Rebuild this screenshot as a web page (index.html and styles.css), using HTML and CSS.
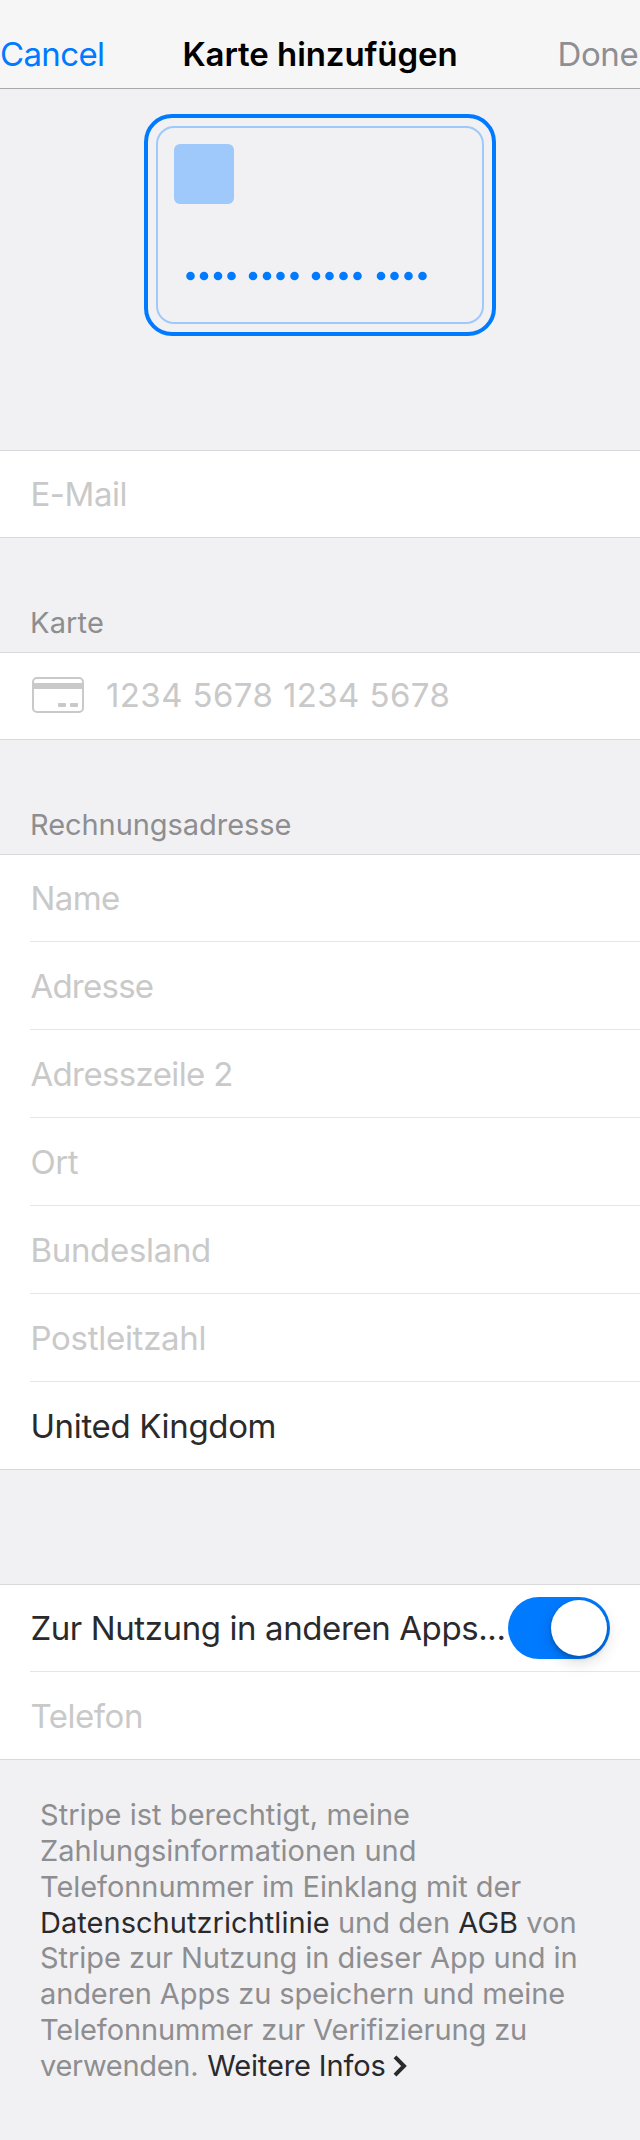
FILE: index.html
```html
<!DOCTYPE html>
<html lang="de">
<head>
<meta charset="utf-8">
<title>Karte hinzufügen</title>
<link rel="stylesheet" href="styles.css">
</head>
<body>
<header class="navbar">
  <span class="nav-action nav-cancel">Cancel</span>
  <h1 class="nav-title">Karte hinzufügen</h1>
  <span class="nav-action nav-done">Done</span>
</header>
<main>
  <div class="hero">
    <svg class="hero-card" width="352" height="222" viewBox="0 0 352 222">
      <rect x="2" y="2" width="348" height="218" rx="26" fill="none" stroke="#007aff" stroke-width="4"/>
      <rect x="13" y="13" width="326" height="196" rx="17" fill="none" stroke="#9fc9fb" stroke-width="2"/>
      <rect x="30" y="30" width="60" height="60" rx="6" fill="#9fc9fb"/>
      <g fill="#007aff">
        <circle cx="46.5" cy="162" r="4.3"/><circle cx="60" cy="162" r="4.3"/><circle cx="74" cy="162" r="4.3"/><circle cx="87.5" cy="162" r="4.3"/>
        <circle cx="109" cy="162" r="4.3"/><circle cx="123" cy="162" r="4.3"/><circle cx="136.5" cy="162" r="4.3"/><circle cx="150.5" cy="162" r="4.3"/>
        <circle cx="172" cy="162" r="4.3"/><circle cx="185.5" cy="162" r="4.3"/><circle cx="199.5" cy="162" r="4.3"/><circle cx="213.5" cy="162" r="4.3"/>
        <circle cx="237" cy="162" r="4.3"/><circle cx="250.5" cy="162" r="4.3"/><circle cx="264.5" cy="162" r="4.3"/><circle cx="278.5" cy="162" r="4.3"/>
      </g>
    </svg>
  </div>

  <section class="group">
    <div class="row"><span class="placeholder email">E-Mail</span></div>
  </section>

  <h2 class="group-label label-card">Karte</h2>
  <section class="group">
    <div class="row row-number">
      <svg class="card-icon" width="52" height="36" viewBox="0 0 52 36">
        <rect x="1" y="1" width="50" height="34" rx="4" fill="none" stroke="#c9c9c9" stroke-width="2"/>
        <path d="M1 6h50v6H1z" fill="#c9c9c9"/>
        <rect x="26" y="26" width="8" height="4" rx="1" fill="#c9c9c9"/>
        <rect x="38" y="26" width="8" height="4" rx="1" fill="#c9c9c9"/>
      </svg>
      <span class="placeholder number">1234 5678 1234 5678</span>
    </div>
  </section>

  <h2 class="group-label label-address">Rechnungsadresse</h2>
  <section class="group">
    <div class="row"><span class="placeholder name">Name</span></div>
    <div class="row"><span class="placeholder street">Adresse</span></div>
    <div class="row"><span class="placeholder street-2">Adresszeile 2</span></div>
    <div class="row"><span class="placeholder city">Ort</span></div>
    <div class="row"><span class="placeholder state">Bundesland</span></div>
    <div class="row"><span class="placeholder zip">Postleitzahl</span></div>
    <div class="row"><span class="value country">United Kingdom</span></div>
  </section>

  <section class="group group-remember">
    <div class="row row-switch">
      <span class="value remember">Zur Nutzung in anderen Apps...</span>
      <span class="switch"><span class="knob"></span></span>
    </div>
    <div class="row"><span class="placeholder phone">Telefon</span></div>
  </section>

  <p class="legal">
    <span class="line l1">Stripe ist berechtigt, meine</span>
    <span class="line l2">Zahlungsinformationen und</span>
    <span class="line l3">Telefonnummer im Einklang mit der</span>
    <span class="line l4"><a class="link">Datenschutzrichtlinie</a> und den <a class="link">AGB</a> von</span>
    <span class="line l5">Stripe zur Nutzung in dieser App und in</span>
    <span class="line l6">anderen Apps zu speichern und meine</span>
    <span class="line l7">Telefonnummer zur Verifizierung zu</span>
    <span class="line l8"><span class="l8-start">verwenden.</span> <a class="link more">Weitere Infos</a><svg class="chevron" width="14" height="22" viewBox="0 0 14 22"><path d="M2 1.8 11 11 2 20.2" fill="none" stroke="#2a2a2c" stroke-width="4"/></svg></span>
  </p>
</main>
</body>
</html>
```
FILE: styles.css
```css
* { box-sizing: border-box; }

body {
  margin: 0;
  min-height: 2140px;
  background: #f1f1f4;
  font-family: Inter, "Liberation Sans", sans-serif;
  font-size: 33px;
  color: #2a2a2c;
  white-space: nowrap;
}

.navbar {
  display: flex;
  justify-content: space-between;
  align-items: center;
  height: 89px;
  padding: 20px 0 0;
  background: #f6f6f6;
  border-bottom: 1px solid #a9a9ac;
}
.nav-action { width: 140px; }
.nav-cancel { color: #007aff; letter-spacing: -.65px; }
.nav-done { color: #8e8e93; letter-spacing: -.37px; padding-left: 57.5px; }
.nav-title {
  margin: 0;
  font-size: 33px;
  font-weight: 600;
  color: #000;
  letter-spacing: -.07px;
}

.hero { display: flex; justify-content: center; height: 361px; padding-top: 25px; }
.hero-card { display: block; }

.group {
  background: #fff;
  border-top: 1px solid #d9d9db;
  border-bottom: 1px solid #d9d9db;
}
.row {
  display: flex;
  align-items: center;
  height: 88px;
  margin-left: 30px;
  padding-left: .4px;
  border-bottom: 1px solid #e6e6e8;
}
.row:first-child { height: 87px; }
.row:last-child { height: 87px; border-bottom: 0; }
.row:only-child { height: 86px; }
.row-number { padding: 0 0 2px 2px; }
.card-icon { flex: none; }
.number { margin-left: 22px; letter-spacing: .4px; }

.placeholder { color: #c9c9c9; }
.email { letter-spacing: -.43px; }
.name { letter-spacing: -.53px; }
.street { letter-spacing: -.75px; }
.street-2 { letter-spacing: -.62px; }
.city { letter-spacing: -.4px; }
.state { letter-spacing: -.31px; }
.zip { letter-spacing: -.27px; }
.country { letter-spacing: -.34px; }
.remember { letter-spacing: -.4px; }
.phone { letter-spacing: -.45px; }

.group-label {
  margin: 0;
  height: 114px;
  padding: 67px 0 0 30px;
  font-size: 29px;
  line-height: 36px;
  font-weight: 400;
  color: #8e8e90;
}
.label-card { letter-spacing: .16px; }
.label-address { letter-spacing: -.06px; }

.group-remember { margin-top: 114px; }
.row-switch { justify-content: space-between; padding-right: 30px; }
.switch {
  display: flex;
  flex: none;
  justify-content: flex-end;
  width: 102px;
  height: 62px;
  padding: 3px;
  border-radius: 31px;
  background: #007aff;
}
.knob {
  width: 56px;
  height: 56px;
  border-radius: 50%;
  background: #fff;
  box-shadow: 0 6px 16px rgba(0, 0, 0, .15), 0 2px 4px rgba(0, 0, 0, .25);
}

.legal {
  margin: 0;
  padding: 37px 0 0 40px;
  font-size: 29px;
  line-height: 35.86px;
  color: #8e8e90;
}
.line { display: block; height: 35.86px; }
.link { color: #2a2a2c; }
.l1 { letter-spacing: .05px; }
.l2 { letter-spacing: .03px; }
.l3 { letter-spacing: -.05px; }
.l4 { letter-spacing: .04px; }
.l5 { letter-spacing: -.05px; }
.l6 { letter-spacing: -.11px; }
.l7 { letter-spacing: -.11px; }
.l8-start { letter-spacing: -.3px; }
.more { margin-left: .8px; letter-spacing: -.12px; }
.chevron { margin-left: 7.5px; vertical-align: -1px; }
```
